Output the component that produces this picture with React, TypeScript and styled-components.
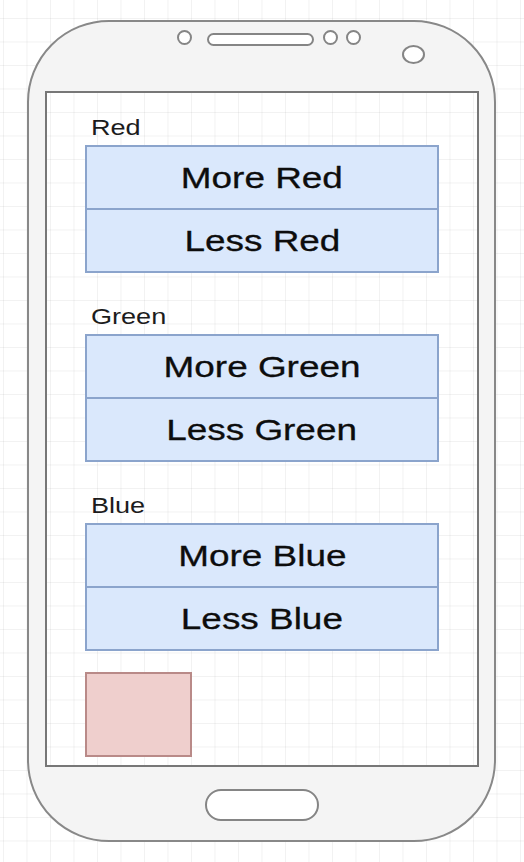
import React from "react";
import styled, { createGlobalStyle } from "styled-components";

const grid = `
  linear-gradient(to right, rgba(0,0,0,0.05) 1px, transparent 1px),
  linear-gradient(to bottom, rgba(0,0,0,0.05) 1px, transparent 1px)
`;

const GlobalStyle = createGlobalStyle`
  html, body {
    margin: 0;
    padding: 0;
    background-color: #ffffff;
    background-image: ${grid};
    background-size: 23.5px 23.5px;
    background-position: 3px 18px;
    background-attachment: fixed;
    font-family: "Liberation Sans", Arial, sans-serif;
  }
  #root { min-height: 862px; }
`;

const Page = styled.div`
  padding: 20px 0 0 27px;
`;

const Phone = styled.div`
  box-sizing: border-box;
  width: 469px;
  height: 822px;
  border: 2px solid #888888;
  border-radius: 82px;
  background: #f4f4f4;
  display: flex;
  flex-direction: column;
`;

const TopBar = styled.div`
  height: 69px;
  flex: none;
  display: flex;
  align-items: flex-start;
  padding: 8px 0 0 148px;
  box-sizing: border-box;
`;

const Dot = styled.div<{ $ml: number }>`
  box-sizing: border-box;
  width: 15px;
  height: 15px;
  margin-left: ${(p) => p.$ml}px;
  border: 2px solid #858585;
  border-radius: 50%;
  background: #fff;
`;

const Speaker = styled.div`
  box-sizing: border-box;
  width: 107px;
  height: 13px;
  margin: 3px 0 0 15px;
  border: 2px solid #858585;
  border-radius: 7px;
  background: #fff;
`;

const Camera = styled.div`
  box-sizing: border-box;
  width: 23px;
  height: 19px;
  margin: 15px 0 0 41px;
  border: 2px solid #858585;
  border-radius: 50%;
  background: #fff;
`;

const Screen = styled.div`
  box-sizing: border-box;
  margin: 0 15px 0 16px;
  height: 676px;
  flex: none;
  border: 2px solid #777777;
  background-color: #ffffff;
  background-image: ${grid};
  background-size: 23.5px 23.5px;
  background-position: 3px 18px;
  background-attachment: fixed;
  padding: 24px 38px 0 38px;
  display: flex;
  flex-direction: column;
  gap: 33px;
`;

const Group = styled.div`
  display: flex;
  flex-direction: column;
`;

const Label = styled.div`
  height: 21px;
  line-height: 21px;
  font-size: 22px;
  color: #1c1c1c;
  padding-left: 6px;
  margin-bottom: 7px;
`;

const Stretch = styled.span<{ $origin: string }>`
  display: inline-block;
  transform: scaleX(1.23);
  transform-origin: ${(p) => p.$origin};
  white-space: nowrap;
`;

const ButtonStack = styled.div`
  box-sizing: border-box;
  border: 2px solid #8ba4cc;
  background: #dae8fc;
  display: flex;
  flex-direction: column;
`;

const Button = styled.div`
  height: 61px;
  display: flex;
  align-items: center;
  justify-content: center;
  font-size: 30px;
  color: #0d0d0d;
  -webkit-text-stroke: 0.3px #0d0d0d;
  & + & {
    border-top: 2px solid #8ba4cc;
  }
`;

const Swatch = styled.div`
  box-sizing: border-box;
  width: 107px;
  height: 85px;
  margin-top: -12px;
  background: #efcfcd;
  border: 2px solid #b98a88;
`;

const BottomBar = styled.div`
  flex: 1;
  display: flex;
  justify-content: center;
  align-items: flex-start;
  padding-top: 22px;
`;

const HomeButton = styled.div`
  box-sizing: border-box;
  width: 114px;
  height: 32px;
  border: 2px solid #858585;
  border-radius: 16px;
  background: #fff;
`;

const colors = ["Red", "Green", "Blue"];

export default function App() {
  return (
    <>
      <GlobalStyle />
      <Page>
        <Phone>
          <TopBar>
            <Dot $ml={0} />
            <Speaker />
            <Dot $ml={9} />
            <Dot $ml={8} />
            <Camera />
          </TopBar>
          <Screen>
            {colors.map((c) => (
              <Group key={c}>
                <Label>
                  <Stretch $origin="left center">{c}</Stretch>
                </Label>
                <ButtonStack>
                  <Button>
                    <Stretch $origin="center">More {c}</Stretch>
                  </Button>
                  <Button>
                    <Stretch $origin="center">Less {c}</Stretch>
                  </Button>
                </ButtonStack>
              </Group>
            ))}
            <Swatch />
          </Screen>
          <BottomBar>
            <HomeButton />
          </BottomBar>
        </Phone>
      </Page>
    </>
  );
}
